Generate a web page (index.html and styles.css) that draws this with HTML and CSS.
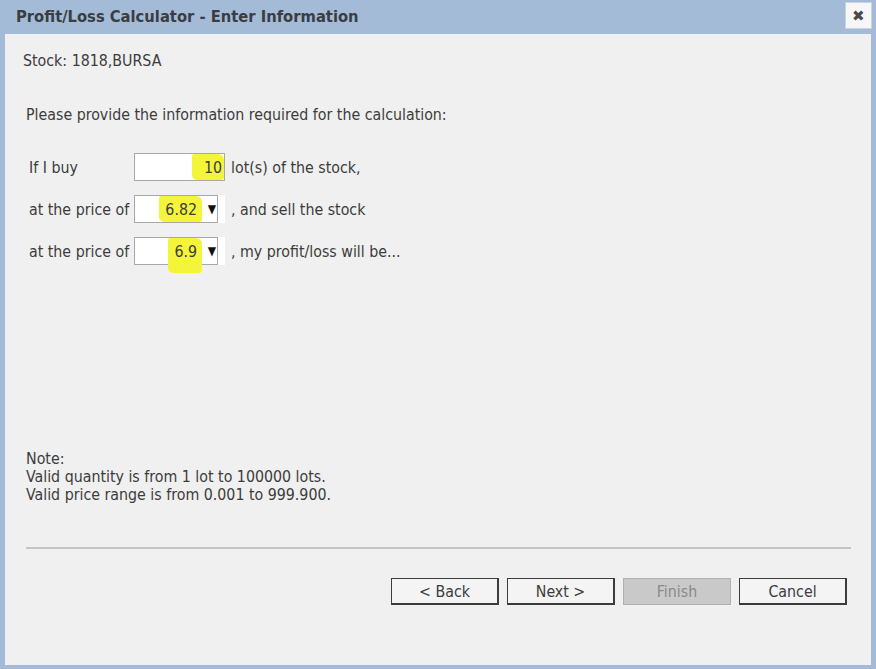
FILE: index.html
```html
<!DOCTYPE html>
<html lang="en">
<head>
    <meta charset="UTF-8">
    <title>Profit/Loss Calculator - Enter Information</title>
    <link rel="stylesheet" href="styles.css">
</head>
<body>
    <div class="dialog">
        <div class="title-bar">
            <span class="title">Profit/Loss Calculator - Enter Information</span>
            <button class="close-btn" title="Close">&#10006;</button>
        </div>
        <div class="content">
            <div class="stock">Stock: 1818,BURSA</div>
            <p class="intro">Please provide the information required for the calculation:</p>

            <div class="form">
                <div class="row">
                    <span class="label">If I buy</span>
                    <span class="field qty"><span class="value mark">10</span></span>
                    <span class="after">lot(s) of the stock,</span>
                </div>
                <div class="row">
                    <span class="label">at the price of</span>
                    <span class="field price">
                        <span class="value mark">6.82</span>
                        <span class="arrow">&#9660;</span>
                    </span>
                    <span class="after">, and sell the stock</span>
                </div>
                <div class="row">
                    <span class="label">at the price of</span>
                    <span class="field price">
                        <span class="value mark long">6.9</span>
                        <span class="arrow">&#9660;</span>
                    </span>
                    <span class="after">, my profit/loss will be...</span>
                </div>
            </div>

            <div class="note">
                Note:<br>
                Valid quantity is from 1 lot to 100000 lots.<br>
                Valid price range is from 0.001 to 999.900.
            </div>

            <hr class="divider">

            <div class="buttons">
                <button class="btn">&lt; Back</button>
                <button class="btn">Next &gt;</button>
                <button class="btn" disabled>Finish</button>
                <button class="btn">Cancel</button>
            </div>
        </div>
    </div>
</body>
</html>
```

FILE: styles.css
```css
body {
    margin: 0;
    background-color: #a3bbd6;
    font-family: "DejaVu Sans Condensed", "DejaVu Sans", sans-serif;
    color: #3c3c3c;
}

.dialog {
    width: 876px;
    height: 669px;
    display: flex;
    flex-direction: column;
}

.title-bar {
    height: 34px;
    display: flex;
    align-items: center;
    justify-content: space-between;
    padding: 0 4px 0 16px;
    box-sizing: border-box;
}

.title {
    font-size: 16.4px;
    font-weight: bold;
    color: #3a3d42;
    margin-top: -2px;
}

.close-btn {
    width: 27px;
    height: 27px;
    margin-top: -3px;
    padding: 0;
    border: 1px solid #c8d4e2;
    background-color: #f7f7f7;
    color: #4a4a4a;
    font-size: 15px;
    line-height: 25px;
}

.content {
    flex: 1;
    margin: 0 5px 4px 5px;
    background-color: #f0f0f0;
    padding: 17px 20px 0 18px;
    font-size: 15.8px;
    display: flex;
    flex-direction: column;
}

.stock {
    height: 20px;
}

.intro {
    margin: 34px 0 0 3px;
}

.form {
    margin: 29px 0 0 6px;
    display: flex;
    flex-direction: column;
    gap: 14px;
}

.row {
    display: flex;
    align-items: center;
    height: 28px;
}

.label {
    width: 105px;
}

.field {
    height: 28px;
    box-sizing: border-box;
    background-color: #fff;
    display: flex;
    align-items: stretch;
    justify-content: flex-end;
    position: relative;
}

.field.qty {
    width: 91px;
    border: 1px solid #a8a8a8;
    margin-right: 6px;
}

.field.price {
    width: 84px;
    border: 1px solid #a8a8a8;
    margin-right: 13px;
    box-shadow: 7px 0 0 #fff;
}

.value {
    display: flex;
    align-items: center;
    padding: 0 2px 0 12px;
}

.mark {
    background-color: #f4f43a;
    border-radius: 2px 6px 3px 5px;
}

.price .value {
    padding: 0 5px 0 6px;
    margin-right: 15px;
}

.price .mark.long {
    margin-bottom: -9px;
    padding-bottom: 9px;
    padding-left: 6px;
}

.arrow {
    position: absolute;
    right: 1px;
    top: 0;
    bottom: 0;
    display: flex;
    align-items: center;
    font-size: 12px;
    color: #111;
}

.note {
    margin: 185px 0 0 3px;
    line-height: 18px;
}

.divider {
    margin: 43px 0 0 3px;
    border: none;
    border-top: 2px solid #c4c4c4;
    width: 825px;
}

.buttons {
    margin-top: 29px;
    display: flex;
    justify-content: flex-end;
    gap: 8px;
    padding-right: 4px;
}

.btn {
    width: 108px;
    height: 27px;
    font-family: inherit;
    font-size: 15.8px;
    color: #3c3c3c;
    background-color: #f4f4f4;
    border: 1px solid #3c3c3c;
    border-right-width: 2px;
    border-bottom-width: 2px;
    padding: 0;
}

.btn:disabled {
    background-color: #c9c9c9;
    color: #8a8a8a;
    border: 1px solid #b0b0b0;
}
```
